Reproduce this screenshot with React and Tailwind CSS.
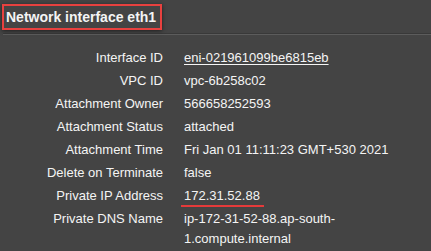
import React from 'react';

const rows = [
  { label: 'Interface ID', value: 'eni-021961099be6815eb', link: true },
  { label: 'VPC ID', value: 'vpc-6b258c02' },
  { label: 'Attachment Owner', value: '566658252593' },
  { label: 'Attachment Status', value: 'attached' },
  { label: 'Attachment Time', value: 'Fri Jan 01 11:11:23 GMT+530 2021' },
  { label: 'Delete on Terminate', value: 'false' },
  { label: 'Private IP Address', value: '172.31.52.88', marked: true },
  { label: 'Private DNS Name', value: 'ip-172-31-52-88.ap-south-1.compute.internal' },
];

export default function App() {
  return (
    <div className="w-[431px] h-[251px] overflow-hidden bg-[#444444] text-[#f4f4f4] font-['Liberation_Sans',Arial,sans-serif]">
      <div className="pt-[4px] pl-[2px] pb-[4px] border-b border-[#5c5c5c] shadow-[0_-1px_0_#393939_inset] ml-[3px]">
        <div className="-ml-[3px] w-[160px] h-[26px] border-[2.5px] border-[#e8413f] shadow-[0_1px_4px_rgba(0,0,0,0.55)] flex items-center pl-[2px]">
          <h2 className="text-[14px] font-bold leading-none text-[#f4f4f4]">Network interface eth1</h2>
        </div>
      </div>

      <div className="pt-[11.5px] text-[13px]">
        {rows.map(row => (
          <div key={row.label} className="flex items-start py-[1.5px]">
            <div className="w-[163px] shrink-0 text-right leading-[20px]">{row.label}</div>
            <div className="w-[218px] ml-[21px] leading-[20px]">
              {row.link ? (
                <span className="underline underline-offset-2">{row.value}</span>
              ) : row.marked ? (
                <span className="relative inline-block">
                  {row.value}
                  <span className="absolute -left-[3px] -right-[4px] bottom-[-1px] h-[2px] bg-[#e53a3a]" />
                </span>
              ) : (
                row.value
              )}
            </div>
          </div>
        ))}
      </div>
    </div>
  );
}
